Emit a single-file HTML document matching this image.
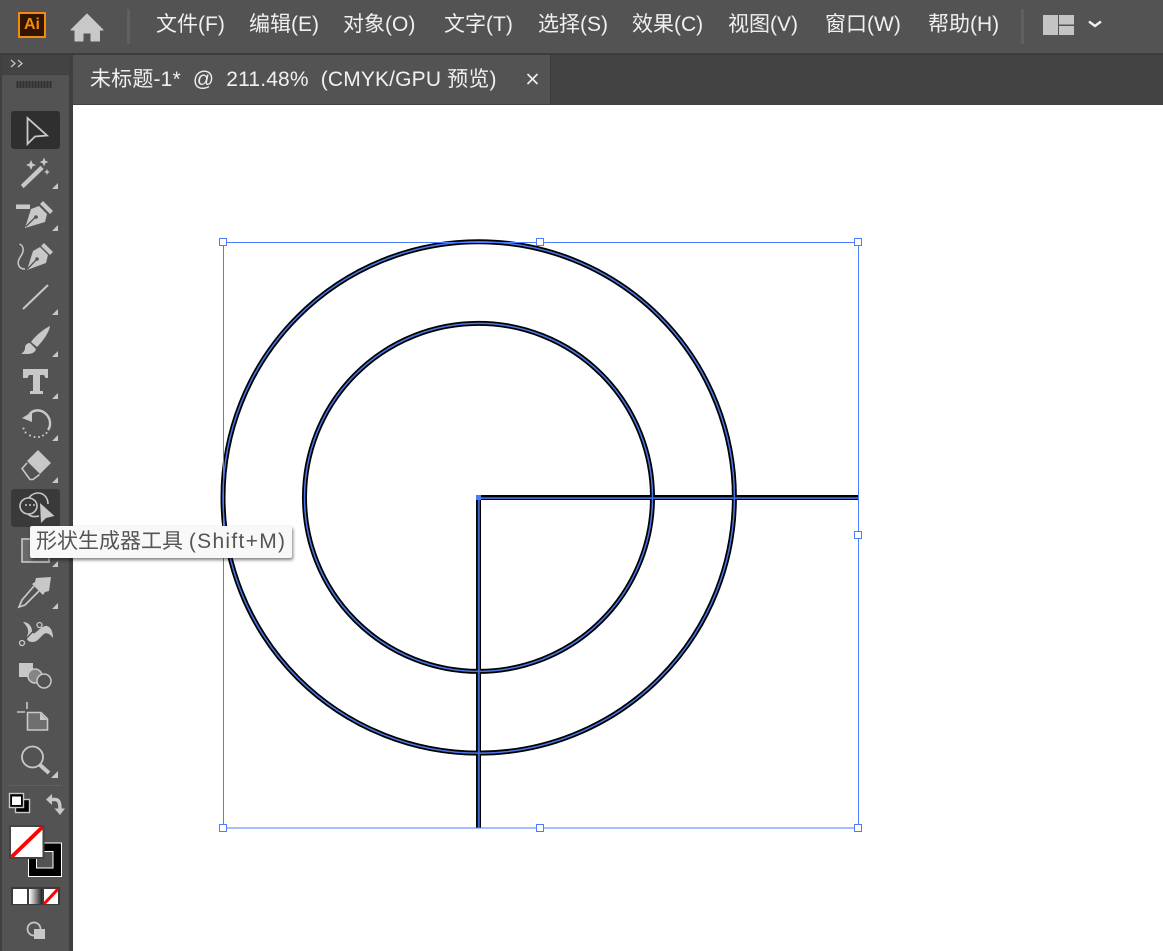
<!DOCTYPE html>
<html><head><meta charset="utf-8">
<style>
html,body{margin:0;padding:0;width:1163px;height:951px;overflow:hidden;background:#fff;font-family:"Liberation Sans","Noto Sans CJK SC",sans-serif}
.a{position:absolute}
#top{left:0;top:0;width:1163px;height:53px;background:#535353;border-bottom:2px solid #3c3c3c;box-sizing:content-box}
.m{position:absolute;top:12px;font-size:21px;line-height:26px;color:#f0f0f0;white-space:nowrap}
#tabbar{left:73px;top:55px;width:1090px;height:50px;background:#434343}
#tab{left:73px;top:55px;width:477px;height:49px;background:#535353;border-right:1px solid #3c3c3c}
#tabt{left:90px;top:66px;font-size:21px;line-height:28px;color:#f0f0f0;white-space:pre;letter-spacing:.16px}
#side{left:0;top:55px;width:73px;height:896px;background:#3f3f3f}
#panel{left:2px;top:75px;width:67px;height:876px;background:#535353}
#head{left:2px;top:55px;width:67px;height:19px;background:#434343}
#tip{left:30px;top:526px;width:262px;height:32px;background:#f8f8f8;border-radius:2px;box-shadow:1px 2px 3px rgba(0,0,0,.5);font-size:21px;line-height:32px;color:#555;white-space:nowrap;padding-left:6px;box-sizing:border-box}
#tip span{letter-spacing:1.3px}
svg{position:absolute;left:0;top:0}
</style></head><body>
<svg width="1163" height="951" style="z-index:1">
<g fill="none">
<circle cx="478.700" cy="497.400" r="255.700" stroke="#000" stroke-width="5"/>
<circle cx="478.500" cy="497.400" r="174" stroke="#000" stroke-width="5"/>
</g>
<rect x="476" y="495" width="382" height="5" fill="#000"/>
<rect x="476" y="495" width="5" height="333" fill="#000"/>
<g fill="none">
<circle cx="478.700" cy="497.400" r="255.700" stroke="#4a78e8" stroke-width="1.500"/>
<circle cx="478.500" cy="497.400" r="174" stroke="#4a78e8" stroke-width="1.500"/>
</g>
<rect x="478" y="497.200" width="380" height="1.800" fill="#3f66cc"/>
<rect x="477.800" y="497.200" width="2" height="330.800" fill="#3f66cc"/>
<rect x="223.500" y="242.500" width="635" height="585.500" fill="none" stroke="#4d7cff" stroke-width="1"/>
<rect x="476" y="495" width="5" height="5" fill="#4d7cff"/>
<g fill="#fff" stroke="#4d7cff" stroke-width="1">
<rect x="219.500" y="238.500" width="7" height="7"/><rect x="536.500" y="238.500" width="7" height="7"/><rect x="854.500" y="238.500" width="7" height="7"/>
<rect x="854.500" y="531.500" width="7" height="7"/>
<rect x="219.500" y="824.500" width="7" height="7"/><rect x="536.500" y="824.500" width="7" height="7"/><rect x="854.500" y="824.500" width="7" height="7"/>
</g>
</svg>

<div class="a" id="top" style="z-index:2"></div>
<div class="a" id="tabbar" style="z-index:2"></div>
<div class="a" id="tab" style="z-index:2"></div>
<div class="a" id="tabt" style="z-index:3">未标题-1*  @  211.48%  (CMYK/GPU 预览)</div>
<div class="a" id="side" style="z-index:2"></div>
<div class="a" id="head" style="z-index:2"></div>
<div class="a" id="panel" style="z-index:2"></div>

<div style="position:absolute;left:0;top:0;z-index:3">
<span class="m" style="left:156px">文件(F)</span>
<span class="m" style="left:249px">编辑(E)</span>
<span class="m" style="left:343px">对象(O)</span>
<span class="m" style="left:444px">文字(T)</span>
<span class="m" style="left:538px">选择(S)</span>
<span class="m" style="left:632px">效果(C)</span>
<span class="m" style="left:728px">视图(V)</span>
<span class="m" style="left:825px">窗口(W)</span>
<span class="m" style="left:928px">帮助(H)</span>
<div class="a" style="left:18px;top:12px;width:24px;height:22px;border:2px solid #f58a0a;background:#2f1500;color:#f58a0a;font-size:16px;font-weight:bold;line-height:22px;text-align:center">Ai</div>
</div>

<svg width="1163" height="951" style="z-index:4">
<!-- top bar -->
<path d="M87 14 L103 30 L99.500 30 L99.500 41 L91 41 L91 33 L83 33 L83 41 L75 41 L75 30 L71 30 Z" fill="#c8c8c8" stroke="#c8c8c8" stroke-width="1" stroke-linejoin="round"/>
<rect x="127" y="9" width="3" height="35" fill="#606060"/>
<rect x="1021" y="9" width="3" height="35" fill="#606060"/>
<rect x="1043" y="15" width="15" height="20" fill="#c4c4c4"/>
<rect x="1059" y="15" width="15" height="9.500" fill="#c4c4c4"/>
<rect x="1059" y="26" width="15" height="9" fill="#c4c4c4"/>
<path d="M1089 21.500l6 4.500 6-4.500" fill="none" stroke="#f0f0f0" stroke-width="2.400"/>
<path d="M527.500 74l10 10M537.500 74l-10 10" stroke="#f0f0f0" stroke-width="1.600"/>
<!-- panel header -->
<path d="M11 60l4 3.500-4 3.500M18 60l4 3.500-4 3.500" fill="none" stroke="#c8c8c8" stroke-width="1.200"/>
<path d="M17.500 81v7M20.500 81v7M23.500 81v7M26.500 81v7M29.500 81v7M32.500 81v7M35.500 81v7M38.500 81v7M41.500 81v7M44.500 81v7M47.500 81v7M50.500 81v7" stroke="#303030" stroke-width="2"/>
<!-- selected backgrounds -->
<rect x="11" y="111" width="49" height="38" rx="3" fill="#2f2f2f"/>
<rect x="11" y="489" width="49" height="38" rx="3" fill="#3a3a3a"/>

<!-- selection arrow -->
<path d="M27.500 118V144L35 136.500L47 135.500Z" fill="none" stroke="#c8c8c8" stroke-width="1.800"/>

<g fill="#c8c8c8">
<!-- wand -->
<path d="M23.500 187.500L21.500 185L40.500 166.500L43 169Z" stroke="#c8c8c8" stroke-width="1" stroke-linejoin="round"/>
<path d="M31 160l1.500 3.500 3.500 1.500-3.500 1.500-1.500 3.500-1.500-3.500-3.500-1.500 3.500-1.500zM44 157.500l1.300 3.200 3.200 1.300-3.200 1.300-1.300 3.200-1.300-3.200-3.200-1.300 3.200-1.300zM47 169l.9 2.100 2.100.9-2.100.9-.9 2.100-.9-2.100-2.100-.9 2.100-.9z"/>
<!-- pen with line -->
<rect x="16" y="204.500" width="14" height="4.500"/>
<path d="M43 201L53 211L50 214L40 204Z"/>
<path d="M39 206L47 214L45 222L25 228L31 209Z"/>
<!-- curvature pen -->
<path d="M44 243L53 252L50 255L41 246Z"/>
<path d="M40 247L48 255L46 263L27 270L33 251Z"/>
<!-- brush -->
<path d="M50 326C49 333 42 342 37 347L31 342C36 335 44 329 50 326Z"/>
<path d="M30 343L36 349C35 353 31 354 27 354H21C24 352 25 350 25 348C25 345 27 343 30 343Z"/>
<!-- type -->
<path d="M23 369H48V378H45.500L44 375H40V391H43V394H30V391H33V375H29L27.500 378H23Z"/>
<!-- eraser -->
<path d="M38 450L51 463L40 474L27 461Z"/>
<!-- corners -->
<path d="M58 183v6h-6zM58 225v6h-6zM58 309v6h-6zM58 351v6h-6zM58 393v6h-6zM58 435v6h-6zM58 477v6h-6zM58 561v6h-6zM58 603v6h-6zM58 771v7h-7z"/>
</g>
<path d="M26 226.500L35 217.500M27.500 269L36 260" stroke="#535353" stroke-width="1.300"/>
<circle cx="36" cy="217" r="1.800" fill="#535353"/>
<circle cx="37" cy="259" r="1.800" fill="#535353"/>
<path d="M19.500 244C24 246 24 251 21.500 255C19 259 17 262 19 266C20 268 22 269 25 269" fill="none" stroke="#c8c8c8" stroke-width="1.500"/>
<path d="M27 463L22 468.500L30 479.500L33 479.500L39.500 474.500" fill="none" stroke="#c8c8c8" stroke-width="1.600" stroke-linejoin="round"/>

<!-- line -->
<path d="M23 309L48 285" stroke="#c8c8c8" stroke-width="2" fill="none"/>
<!-- rotate -->
<path d="M29 415C33 409 41 409 46 414C51 419 51 426 48 430" fill="none" stroke="#c8c8c8" stroke-width="2.400"/>
<path d="M22 418L32 412L32 422Z" fill="#c8c8c8"/>
<path d="M23.500 428.500h.1M25.500 432.500h.1M30 435.500h.1M34.500 437h.1M39 437h.1M43 435.500h.1M46.500 433h.1" stroke="#c8c8c8" stroke-width="2" stroke-linecap="round"/>

<!-- shape builder -->
<g fill="none" stroke="#c8c8c8" stroke-width="1.600">
<ellipse cx="28.500" cy="506" rx="8.500" ry="8"/>
<path d="M29 497.500C32 494 35 493 38 493C44 493 48 498 48 504"/>
<path d="M28 514C31 517 35 517 39 516"/>
</g>
<path d="M25 505h2M29 505h2M33 505h2" stroke="#c8c8c8" stroke-width="1.500"/>
<path d="M40 503L41 523L46 518L54.500 516Z" fill="#c8c8c8"/>

<!-- gradient/mesh box behind tooltip -->
<rect x="22" y="539" width="27" height="23" fill="#6a6a6a" stroke="#c8c8c8" stroke-width="1.600"/>

<!-- eyedropper -->
<path d="M34 586L22 600l-3 7 6-2 14-14" fill="#535353" stroke="#c8c8c8" stroke-width="1.700"/>
<path d="M36 578L51 577L49 591L45 592L43 595L32 584L35 582Z" fill="#c8c8c8"/>

<!-- puppet warp -->
<path d="M23 622C28 622 32 626 32 631C32 633 33 634 35 633C39 630 43 625 47 626C51 627 53 632 53 638C50 634 47 632 44 634C40 637 38 642 32 642C28 642 26 639 27 636C29 632 29 628 23 622Z" fill="#c8c8c8"/>
<path d="M22 643L39 625" stroke="#535353" stroke-width="1.400"/>
<circle cx="22" cy="643" r="2.500" fill="#535353" stroke="#c8c8c8" stroke-width="1.300"/>
<circle cx="39.500" cy="625" r="2.500" fill="#535353" stroke="#c8c8c8" stroke-width="1.300"/>

<!-- shape combos -->
<rect x="19" y="663" width="14" height="14" fill="#c8c8c8"/>
<circle cx="35" cy="676" r="7" fill="#858585" stroke="#c8c8c8" stroke-width="1.500"/>
<circle cx="44" cy="681" r="7" fill="#535353" stroke="#c8c8c8" stroke-width="1.500"/>

<!-- artboard -->
<path d="M17 712H25M27 702V709" stroke="#c8c8c8" stroke-width="1.600" fill="none"/>
<path d="M27.500 712.500H41L47.500 719V730H27.500Z" fill="#6e6e6e" stroke="#c8c8c8" stroke-width="1.600"/>
<path d="M40 713V720H47Z" fill="#c8c8c8"/>

<!-- zoom -->
<circle cx="32.500" cy="757" r="10.500" fill="none" stroke="#c8c8c8" stroke-width="1.800"/>
<path d="M40 765L49 773" stroke="#c8c8c8" stroke-width="4"/>

<!-- divider -->
<rect x="9" y="785" width="53" height="1" fill="#5f5f5f"/>

<!-- default fill stroke -->
<rect x="15.500" y="799.500" width="14" height="13" fill="#000" stroke="#c8c8c8" stroke-width="1.400"/>
<rect x="9.500" y="793.500" width="14" height="14" fill="#000" stroke="#c8c8c8" stroke-width="1.400"/>
<rect x="12" y="796.500" width="9" height="8.500" fill="#fff"/>
<!-- swap -->
<path d="M50 799.500L55 799.500C59.500 799.500 60 804 60 810" fill="none" stroke="#c8c8c8" stroke-width="3.400"/>
<path d="M52 794L46 799.500L52 805ZM54.500 808.500H65L60 815Z" fill="#c8c8c8"/>

<!-- stroke swatch -->
<rect x="28.500" y="843" width="33" height="33.500" fill="#000" stroke="#fff" stroke-width="1"/>
<rect x="36.500" y="851.500" width="16.500" height="16.500" fill="#535353" stroke="#fff" stroke-width="1"/>
<!-- fill swatch -->
<rect x="10" y="826" width="33.500" height="32" fill="#fff" stroke="#444" stroke-width="2"/>
<path d="M11.500 857L42.500 827" stroke="#f00" stroke-width="3.800"/>

<!-- modes -->
<rect x="11" y="887" width="49" height="18" fill="#3a3a3a"/>
<defs><linearGradient id="g" x1="0" x2="1"><stop offset="0" stop-color="#fff"/><stop offset="1" stop-color="#222"/></linearGradient></defs>
<rect x="13" y="889" width="14" height="15" fill="#fff"/>
<rect x="29" y="889" width="13" height="15" fill="url(#g)"/>
<rect x="44" y="889" width="14" height="15" fill="#fff"/>
<path d="M44 904L58 889" stroke="#f00" stroke-width="3"/>

<!-- screen mode -->
<circle cx="34" cy="929" r="6.500" fill="none" stroke="#c8c8c8" stroke-width="1.700"/>
<rect x="34" y="929" width="11" height="10" fill="#c8c8c8"/>
</svg>
<div class="a" id="tip" style="z-index:5">形状生成器工具 <span>(Shift+M)</span></div>
</body></html>
